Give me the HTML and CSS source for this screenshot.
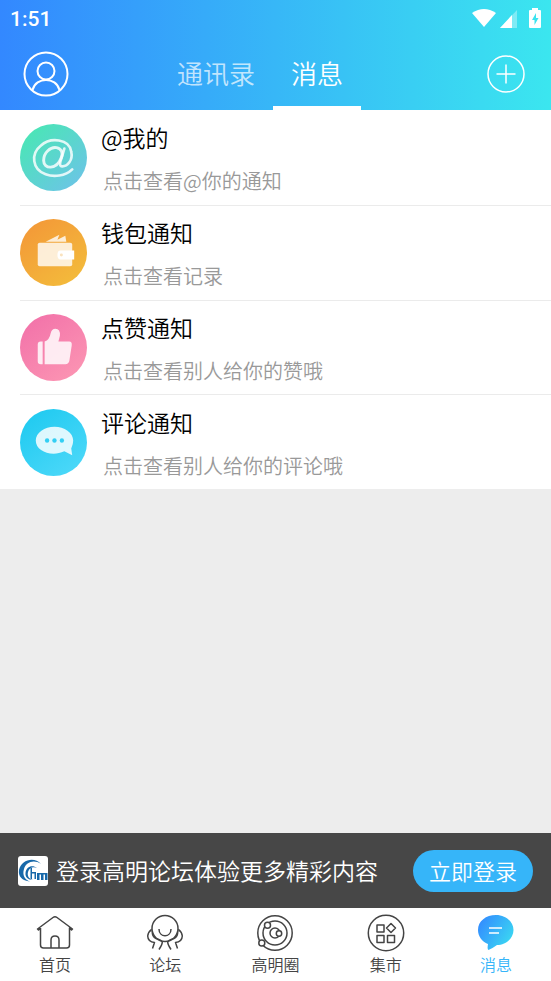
FILE: index.html
```html
<!DOCTYPE html>
<html lang="zh-CN">
<head>
<meta charset="utf-8">
<meta name="viewport" content="width=device-width, initial-scale=1">
<title>消息</title>
<link rel="stylesheet" href="styles.css">
</head>
<body>
<div class="app">
  <header class="header">
    <div class="status">
      <span class="time">1:51</span>
      <svg class="status-icons" viewBox="0 0 72 24" width="72" height="24" aria-hidden="true">
        <path fill="#fff" d="M0 8Q12 0 24 8L12 22Z"/>
        <path fill="#fff" fill-opacity=".35" d="M45 5V23H28Z"/>
        <path fill="#fff" d="M40 10V23H28Z"/>
        <path fill="#fff" fill-rule="evenodd" d="M60 3H66V5H68Q69 5 69 6V22Q69 23 68 23H58Q57 23 57 22V6Q57 5 58 5H60ZM64 8L60 15H62.500V20L66.500 13H64Z"/>
      </svg>
    </div>
    <div class="bar">
      <button class="icon-button" aria-label="个人中心">
        <svg viewBox="0 0 46 46" width="46" height="46" fill="none" stroke="#fff" stroke-width="2">
          <circle cx="23" cy="23" r="21.500"/><circle cx="23" cy="20" r="8.500"/><path d="M9.500 39C13 25.500 33 25.500 36.500 39"/>
        </svg>
      </button>
      <nav class="tabs">
        <a class="tab" href="#contacts">通讯录</a>
        <a class="tab tab-active" href="#messages">消息</a>
      </nav>
      <button class="icon-button" aria-label="添加">
        <svg viewBox="0 0 38 38" width="38" height="38" fill="none" stroke="#fff" stroke-width="1.500">
          <circle cx="19" cy="19" r="18"/><path d="M9.500 19H28.500M19 9.500V28.500"/>
        </svg>
      </button>
    </div>
  </header>

  <main class="content">
    <ul class="list">
      <li><a class="item" href="#mentions">
        <svg class="avatar" viewBox="0 0 68 68">
          <defs><linearGradient id="green" x1=".15" y1=".1" x2=".9" y2=".9"><stop stop-color="#4be5b7"/><stop offset="1" stop-color="#6bc5e5"/></linearGradient></defs>
          <circle cx="34" cy="34" r="34" fill="url(#green)"/>
          <g fill="none" stroke="#fff" stroke-opacity=".82" stroke-linecap="round">
            <path stroke-width="2.700" d="M53 46C46 53 34 54 26 51C12 46 11 30 21 22C31 13 50 15 52 28C54 37 48 43 43 43C39 43 41 38 42 35L45 25"/>
            <path stroke-width="3" d="M42 34C37 47 24 46 24 37C24 29 31 23 37 24C42 25 44 29 42 34Z"/>
          </g>
        </svg>
        <span class="text"><span class="title">@我的</span><span class="note">点击查看@你的通知</span></span>
      </a></li>
      <li><a class="item" href="#wallet">
        <svg class="avatar" viewBox="0 0 68 68">
          <defs><linearGradient id="orange" x1=".2" y1=".1" x2=".8" y2=".9"><stop stop-color="#f39b38"/><stop offset="1" stop-color="#f3b93b"/></linearGradient></defs>
          <circle cx="34" cy="34" r="34" fill="url(#orange)"/>
          <path fill="#fff" fill-opacity=".8" d="M26 23L40 16L38 21L46 17L47 23Z"/>
          <rect x="18" y="24" width="35" height="24" rx="2" fill="#fff" fill-opacity=".8"/>
          <path fill="#fff" d="M41 32H55V41H41Q38 41 38 36.500T41 32Z"/><circle cx="42" cy="36.500" r="1.500" fill="#fae2bd"/>
        </svg>
        <span class="text"><span class="title">钱包通知</span><span class="note">点击查看记录</span></span>
      </a></li>
      <li><a class="item" href="#likes">
        <svg class="avatar" viewBox="0 0 68 68">
          <defs><linearGradient id="pink" x1=".2" y1=".1" x2=".8" y2=".9"><stop stop-color="#f375aa"/><stop offset="1" stop-color="#fb92b2"/></linearGradient></defs>
          <circle cx="34" cy="34" r="34" fill="url(#pink)"/>
          <path fill="#fff" fill-opacity=".84" d="M23 28V51H21Q18 51 18 48V31Q18 28 21 28ZM25 28Q30 26 31 20Q32 15 36 15Q41 15 40.500 22L39 28H50Q53 28 52.500 32L50 48Q49 51 46 51H25Z"/>
        </svg>
        <span class="text"><span class="title">点赞通知</span><span class="note">点击查看别人给你的赞哦</span></span>
      </a></li>
      <li><a class="item" href="#comments">
        <svg class="avatar" viewBox="0 0 68 68">
          <defs><linearGradient id="cyan" x1=".2" y1=".1" x2=".8" y2=".9"><stop stop-color="#23cbf1"/><stop offset="1" stop-color="#49d7f8"/></linearGradient></defs>
          <circle cx="34" cy="34" r="34" fill="url(#cyan)"/>
          <path fill="#fff" fill-opacity=".84" d="M35 18C45 18 54 24 54 32Q54 36 52 40L53 47L45 43C32 49 16 43 16 32C16 24 25 18 35 18Z"/>
          <g fill="#33cff4"><circle cx="27.500" cy="32" r="2.200"/><circle cx="35" cy="32" r="2.200"/><circle cx="42.500" cy="32" r="2.200"/></g>
        </svg>
        <span class="text"><span class="title">评论通知</span><span class="note">点击查看别人给你的评论哦</span></span>
      </a></li>
    </ul>
  </main>

  <section class="login">
    <svg class="logo" viewBox="0 0 30 30" width="30" height="30" aria-hidden="true">
      <rect width="30" height="30" rx="3" fill="#fff"/>
      <path fill="#1768a9" d="M23 8C16 3 8 6 6 13C4 19 7 24 12 25.500C4 25 0 20 1 14C3 4 16 0 23 8Z"/>
      <path fill="#1768a9" d="M19 12C15 10 11 12 10 16C9 20 11 23 15 24C10 24 7 21 7.500 17C8 11 14 8 19 12Z"/>
      <path fill="#1768a9" d="M12.500 12H14V23H12.500ZM14 16H18V23H16.500V17.500H14Z"/>
      <path fill="#1768a9" d="M19 17H29.500V24H27V18.500H25.500V24H23V18.500H21.500V24H19Z"/>
    </svg>
    <p class="login-text">登录高明论坛体验更多精彩内容</p>
    <button class="login-button">立即登录</button>
  </section>

  <nav class="bottom">
    <a class="nav-item" href="#home">
      <svg class="nav-icon" viewBox="0 0 38 38"><path d="M4.500 14L2.500 16L1.500 15L17 3.500Q19 2 21 3.500L36.500 15L35.500 16L33.500 14V31Q33.500 34 30.500 34H7.500Q4.500 34 4.500 31V14M15 34V26Q15 22 19 22T23 26V34"/></svg>
      <span>首页</span>
    </a>
    <a class="nav-item" href="#forum">
      <svg class="nav-icon" viewBox="0 0 38 38"><circle cx="19" cy="14.500" r="13"/><path d="M13 15C13 24 25 24 25 15M5.700 15.300Q2 18 1.700 22Q2 28 8.500 28.500L6.500 34.500M6.300 17Q6 23 10 24.500Q16 26 16.300 28.500Q16 31 13 35.500M32.300 15.300Q36 18 36.300 22Q36 28 29.500 28.500L31.500 34.500M31.700 17Q32 23 28 24.500Q22 26 21.700 28.500Q22 31 25 35.500"/></svg>
      <span>论坛</span>
    </a>
    <a class="nav-item" href="#circle">
      <svg class="nav-icon" viewBox="0 0 38 38"><circle cx="19" cy="19" r="17.200"/><circle cx="19" cy="19" r="12"/><circle cx="19" cy="19" r="5"/><g class="node"><circle cx="11.500" cy="11.300" r="3"/><circle cx="5.800" cy="29" r="3"/><circle cx="23" cy="19.500" r="2.700"/></g></svg>
      <span>高明圈</span>
    </a>
    <a class="nav-item" href="#market">
      <svg class="nav-icon" viewBox="0 0 38 38"><circle cx="19" cy="19" r="17.700"/><path d="M10 11H17V18H10ZM10 21.500H17V28.500H10ZM20.500 21.500H27.500V28.500H20.500ZM24 9.500L28.500 14L24 18.500L19.500 14Z"/></svg>
      <span>集市</span>
    </a>
    <a class="nav-item nav-active" href="#messages">
      <svg class="nav-icon" viewBox="0 0 38 38">
        <defs><linearGradient id="bubble" x1="0" y1=".2" x2="1" y2=".8"><stop stop-color="#338bff"/><stop offset="1" stop-color="#3bdcf1"/></linearGradient></defs>
        <path class="bubble" fill="url(#bubble)" d="M19 1C29 1 36.500 8 36.500 16C36.500 25 28 31 20 31Q16 34 11.500 36Q10 36 11 30C5 28 1 22 1 16C1 7 9 1 19 1Z"/><path class="lines" d="M12 14H25M12 19H22"/>
      </svg>
      <span>消息</span>
    </a>
  </nav>
</div>
</body>
</html>
```
FILE: styles.css
```css
* { box-sizing: border-box; }
body {
  margin: 0;
  background: #ededed;
  font-family: "Noto Sans CJK SC", sans-serif;
  font-weight: 350;
}
a { color: inherit; text-decoration: none; }
button { border: 0; padding: 0; font: inherit; color: inherit; cursor: pointer; }
svg { display: block; flex: none; }
.app { min-height: 100vh; display: flex; flex-direction: column; }
.header { background: linear-gradient(90deg, #3388ff, #3be6ef); color: #fff; }
.status { display: flex; justify-content: space-between; height: 37px; padding: 5px 7px 0 10px; }
.time { font: 500 21px/28px Roboto, sans-serif; }
.bar { display: grid; grid-template-columns: 1fr auto 1fr; height: 73px; padding: 0 26px 0 23px; }
.icon-button { align-self: center; justify-self: start; background: none; }
.icon-button:last-child { justify-self: end; }
.tabs { display: flex; margin-right: 28px; }
.tab { padding: 16px 18px 0; font-size: 26px; line-height: 40px; color: rgba(255, 255, 255, .7); }
.tab-active { color: #fff; border-bottom: 4px solid #fff; }
.content { flex: 1; }
.list { display: grid; grid-auto-rows: 1fr; min-height: 379px; margin: 0; padding: 0 0 0 20px; list-style: none; background: #fff; }
.list li { display: flex; }
.list li + li { border-top: 1px solid #ebebeb; }
.item { flex: 1; display: flex; align-items: center; gap: 14px; }
.avatar { width: 67px; height: 67px; }
.text { display: flex; flex-direction: column; gap: 12px; padding-top: 3px; }
.title { font-size: 23px; line-height: 32px; color: #000; }
.note { padding-left: 2px; font-size: 20px; line-height: 32px; color: #999; }
.login { display: flex; align-items: center; height: 75px; padding: 0 18px; background: #474747; color: #fff; }
.login-text { flex: 1; margin: 0 0 0 8px; padding-bottom: 2px; font-size: 23px; line-height: 34px; }
.login-button { width: 120px; height: 42px; padding-bottom: 2px; border-radius: 21px; background: #36b5f9; font-size: 22px; line-height: 32px; }
.bottom { display: grid; grid-template-columns: repeat(5, 1fr); height: 73px; padding-top: 6px; background: #fff; color: #444; }
.nav-item { display: flex; flex-direction: column; align-items: center; font-size: 16px; line-height: 24px; }
.nav-icon { width: 38px; height: 38px; fill: none; stroke: #444; stroke-width: 1.500; stroke-linejoin: round; }
.node { fill: #fff; }
.nav-active { color: #36b5f9; }
.bubble { stroke: none; }
.lines { stroke: #fff; }
```
